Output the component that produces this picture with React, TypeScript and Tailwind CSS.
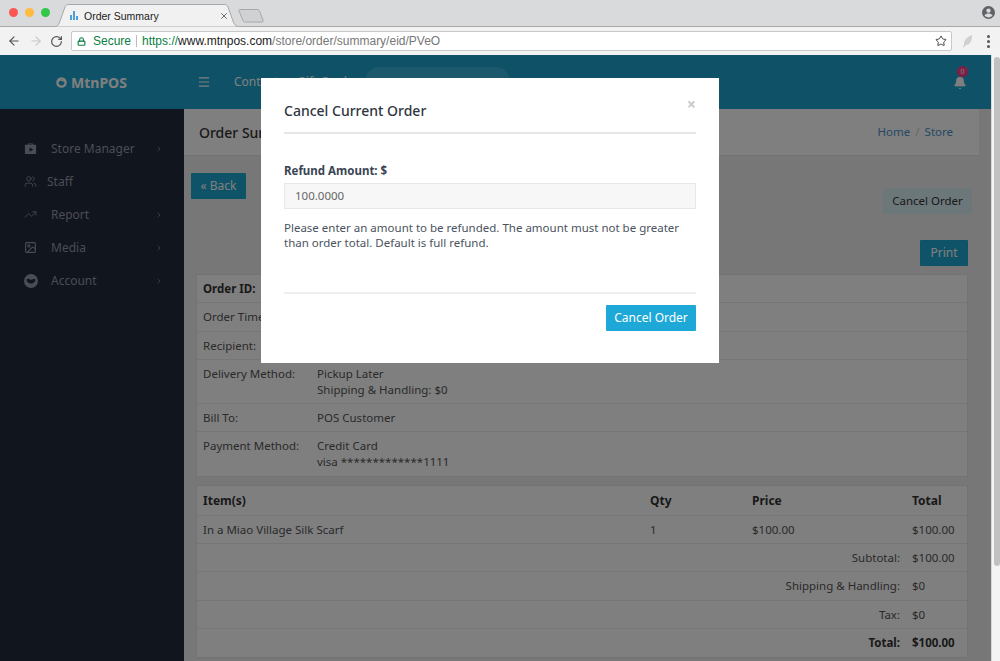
import { ArrowLeft, ArrowRight, Bell, ChevronRight, Image, Lock, Menu, RotateCw, Star, TrendingUp, Users, X } from "lucide-react"

const orderRows = [
  { label: "Order ID:", lines: [], bold: true, h: "h-[28px]" },
  { label: "Order Time:", lines: [], h: "h-[29px]" },
  { label: "Recipient:", lines: [], h: "h-[28px]" },
  { label: "Delivery Method:", lines: ["Pickup Later", "Shipping & Handling: $0"], h: "h-[44px]" },
  { label: "Bill To:", lines: ["POS Customer"], h: "h-[28px]" },
  { label: "Payment Method:", lines: ["Credit Card", "visa *************1111"], h: "h-[44px]" },
]

const totals = [
  { label: "Subtotal:", value: "$100.00", h: "h-[28px]" },
  { label: "Shipping & Handling:", value: "$0", h: "h-[29px]" },
  { label: "Tax:", value: "$0", h: "h-[28px]" },
  { label: "Total:", value: "$100.00", bold: true, h: "h-[28px]" },
]

function BrowserChrome() {
  return (
    <div className="h-[55px] shrink-0 flex flex-col font-['Liberation_Sans',sans-serif]">
      <div className="relative h-[27px] bg-[#d9dadc] border-b border-[#a8a8a8] flex items-center">
        <div className="flex gap-[7px] pl-[9px] pb-[1px]">
          <span className="w-[9px] h-[9px] rounded-full bg-[#fc5753]" />
          <span className="w-[9px] h-[9px] rounded-full bg-[#fdbc40]" />
          <span className="w-[9px] h-[9px] rounded-full bg-[#33c748]" />
        </div>
        <svg className="absolute left-[54px] top-[4px]" width="212" height="23" viewBox="0 0 212 23">
          <path d="M1 23 C4 22 5 20 6 17 L11 3 C12 1 13 .5 15 .5 H170 C172 .5 173 1 174 3 L179 17 C180 20 181 22 186 23 Z" fill="#f1f1f1" stroke="#a8a8a8" />
          <path d="M185 7 C184.500 6 185 5.500 186 5.500 H203 C204.500 5.500 205 6 205.500 7 L209 16 C209.500 17.500 209 18 208 18 H191 C190 18 189.500 17.500 189 16.500 Z" fill="#d0d1d3" stroke="#a8a8a8" />
        </svg>
        <div className="absolute left-[70px] top-[11px] flex items-end gap-[1px] h-[9px]">
          <span className="w-[2px] h-[5px] bg-[#4a9fdc]" />
          <span className="w-[2px] h-[9px] bg-[#4a9fdc]" />
          <span className="w-[2px] h-[4px] bg-[#4a9fdc]" />
        </div>
        <span className="absolute left-[84px] top-[9px] text-[10.500px] leading-[14px] text-[#222]">Order Summary</span>
        <X className="absolute left-[219px] top-[11px] text-[#555]" size={10} strokeWidth={2} />
        <svg className="absolute left-[982px] top-[6px]" width="13" height="13" viewBox="0 0 24 24" fill="#5f6368">
          <path d="M12 0a12 12 0 1 0 0 24 12 12 0 0 0 0-24zm0 4.500a4 4 0 1 1 0 8 4 4 0 0 1 0-8zm0 16.500c-3 0-5.800-1.500-7.400-3.900C5.800 15 9.800 14 12 14s6.200 1 7.400 3.100C17.800 19.500 15 21 12 21z" />
        </svg>
      </div>
      <div className="flex-1 bg-[#f2f2f2] flex items-center">
        <ArrowLeft className="ml-[7px] text-[#555]" size={14} strokeWidth={2} />
        <ArrowRight className="ml-[8px] text-[#c8c8c8]" size={14} strokeWidth={2} />
        <RotateCw className="ml-[7px] text-[#555]" size={13} strokeWidth={2.200} />
        <div className="ml-[8px] w-[881px] h-[20px] bg-white border border-[#c9c9c9] rounded-[2px] flex items-center text-[12px]">
          <Lock className="ml-[5px] text-[#0b8043]" size={9} strokeWidth={3} />
          <span className="ml-[7px] text-[#0b8043]">Secure</span>
          <span className="mx-[5px] w-px h-[12px] bg-[#bbb]" />
          <span className="text-[#0b8043]">https://</span>
          <span className="text-[#222]">www.mtnpos.com</span>
          <span className="text-[#777]">/store/order/summary/eid/PVeO</span>
          <Star className="ml-auto mr-[4px] text-[#444]" size={12} strokeWidth={2} />
        </div>
        <svg className="ml-[11px]" width="10" height="13" viewBox="0 0 10 13" fill="#cfcfcf">
          <path d="M9 0 C4 2 1 5 1 9 L0 13 L3 10 C7 10 9 6 9 0 Z" />
        </svg>
        <div className="ml-[14px] flex flex-col gap-[2px]">
          <span className="w-[3px] h-[3px] rounded-full bg-[#555]" />
          <span className="w-[3px] h-[3px] rounded-full bg-[#555]" />
          <span className="w-[3px] h-[3px] rounded-full bg-[#555]" />
        </div>
      </div>
    </div>
  )
}

function SideItem({ icon, label, arrow = true, gap = "w-[27px]" }: { icon: React.ReactNode; label: string; arrow?: boolean; gap?: string }) {
  return (
    <div className="h-[33px] flex items-center pl-[24px] text-[12px] text-[#969aa8]">
      <span className={`${gap} flex shrink-0`}>{icon}</span>
      <span>{label}</span>
      {arrow && <ChevronRight className="absolute left-[155px]" size={8} strokeWidth={2} />}
    </div>
  )
}

function Sidebar() {
  return (
    <div className="relative w-[184px] shrink-0 bg-[#222a3c] pt-[23px]">
      <SideItem
        label="Store Manager"
        icon={
          <svg width="13" height="13" viewBox="0 0 14 14" fill="currentColor">
            <path d="M4.500 3V1.500h5V3H13v10H1V3zM5.500 3h3V2.500h-3zM6 6v4.500L10 8.200z" fillRule="evenodd" />
          </svg>
        }
      />
      <SideItem label="Staff" arrow={false} gap="w-[23px]" icon={<Users size={13} strokeWidth={1.500} />} />
      <SideItem label="Report" icon={<TrendingUp size={13} strokeWidth={1.500} />} />
      <SideItem label="Media" icon={<Image size={13} strokeWidth={2} />} />
      <SideItem
        label="Account"
        icon={
          <svg width="14" height="14" viewBox="0 0 14 14" fill="currentColor">
            <path d="M7 0a7 7 0 1 0 0 14A7 7 0 0 0 7 0zM2.500 5.500C4 4 6 5.500 7 6c1.500-.8 3-1.500 4.500-.5C11 8 9.500 9.500 7 9.500S3 8 2.500 5.500z" fillRule="evenodd" />
          </svg>
        }
      />
    </div>
  )
}

function OrderPanels() {
  return (
    <div className="ml-[12px] w-[772px] flex flex-col gap-[8px] text-[11.500px] text-[#555]">
      <div className="bg-white border border-[#e6e6e6] flex flex-col divide-y divide-[#ececec]">
        {orderRows.map((row) => (
          <div key={row.label} className={`${row.h} flex items-start pt-[6px] px-[6px] leading-[16px] shrink-0`}>
            <span className={`w-[114px] shrink-0 ${row.bold ? "font-bold text-[#333]" : ""}`}>{row.label}</span>
            <div className="flex flex-col">
              {row.lines.map((line) => <span key={line}>{line}</span>)}
            </div>
          </div>
        ))}
      </div>
      <div className="bg-white border border-[#e6e6e6] flex flex-col divide-y divide-[#ececec]">
        <div className="h-[30px] grid grid-cols-[447px_102px_160px_1fr] items-center px-[6px] text-[12px] font-bold text-[#333]">
          <span>Item(s)</span>
          <span>Qty</span>
          <span>Price</span>
          <span>Total</span>
        </div>
        <div className="h-[28px] grid grid-cols-[447px_102px_160px_1fr] items-center px-[6px]">
          <span>In a Miao Village Silk Scarf</span>
          <span>1</span>
          <span>$100.00</span>
          <span>$100.00</span>
        </div>
        {totals.map((row) => (
          <div key={row.label} className={`${row.h} grid grid-cols-[697px_1fr] items-center px-[6px] ${row.bold ? "font-bold text-[#333]" : ""}`}>
            <span className="text-right">{row.label}</span>
            <span className="pl-[12px]">{row.value}</span>
          </div>
        ))}
      </div>
    </div>
  )
}

function CancelModal() {
  return (
    <div className="absolute left-[261px] top-[23px] w-[458px] h-[285px] bg-white px-[23px] flex flex-col font-['Noto_Sans',sans-serif] text-[#3f4752]">
      <div className="h-[56px] shrink-0 border-b-2 border-[#e6e6e6] flex items-center justify-between">
        <h2 className="text-[14px] font-medium text-[#2f3640] pt-[11px]">Cancel Current Order</h2>
        <span className="text-[16px] font-bold text-[#c9c9c9] leading-none pb-[3px]">×</span>
      </div>
      <label className="mt-[29px] text-[11.500px] leading-[16px] font-bold text-[#3a4452]">Refund Amount: $</label>
      <div className="mt-[4px] h-[26px] shrink-0 bg-[#f7f7f7] border border-[#e8e8e8] flex items-center pl-[10px] text-[11.500px] text-[#666]">100.0000</div>
      <p className="mt-[11px] text-[11.500px] leading-[15px] text-[#4a5360]">
        Please enter an amount to be refunded. The amount must not be greater than order total. Default is full refund.
      </p>
      <div className="mt-[42px] border-t-2 border-[#eeeeee] flex justify-end pt-[11px]">
        <button className="w-[90px] h-[26px] bg-[#1ea8d8] rounded-[1px] text-white text-[12px]">Cancel Order</button>
      </div>
    </div>
  )
}

export default function App() {
  return (
    <div className="w-[1000px] h-[661px] overflow-hidden flex flex-col bg-white">
      <BrowserChrome />
      <div className="flex-1 flex min-h-0">
        <div className="relative w-[991px] flex flex-col font-['Noto_Sans',sans-serif] bg-[#eeeeee] overflow-hidden">
          <div className="h-[54px] shrink-0 bg-[#1ea5d0] flex items-center text-[#ffffff]">
            <div className="w-[197px] pl-[56px] flex items-center gap-[4px] text-[14px] font-bold">
              <svg width="11" height="11" viewBox="0 0 12 12" fill="none" stroke="currentColor" strokeWidth="2.500">
                <circle cx="6" cy="6" r="4.500" />
                <path d="M2 5 L5 3 L10 5" strokeWidth="1.500" />
              </svg>
              MtnPOS
            </div>
            <Menu size={14} strokeWidth={2} />
            <span className="ml-[23px] text-[12px]">Content</span>
            <span className="ml-[18px] text-[12px]">Gift Card</span>
            <div className="ml-[18px] w-[145px] h-[30px] rounded-full bg-[#3bb2d8]" />
            <div className="relative ml-auto mr-[24px] mt-[2px]">
              <Bell size={14} fill="currentColor" strokeWidth={1.500} />
              <span className="absolute left-[4px] top-[-10px] w-[11px] h-[11px] rounded-full bg-[#fe3a8a] text-[7px] leading-[11px] text-center">0</span>
            </div>
          </div>
          <div className="flex-1 flex min-h-0">
            <Sidebar />
            <div className="flex-1 flex flex-col min-w-0">
              <div className="h-[47px] shrink-0 mr-[12px] bg-white border-b border-[#e6e6e6] flex items-center justify-between pl-[15px] pr-[26px]">
                <span className="text-[14px] font-medium text-[#333]">Order Summary</span>
                <div className="flex items-center gap-[5px] text-[11.500px] text-[#4a90c8]">
                  <span>Home</span>
                  <span className="text-[#ccc]">/</span>
                  <span>Store</span>
                </div>
              </div>
              <div className="h-[84px] shrink-0 flex items-start justify-between pl-[7px] pr-[19px] pt-[17px]">
                <button className="w-[55px] h-[26px] bg-[#1fa6d0] rounded-[1px] text-white text-[12px]">« Back</button>
                <button className="mt-[15px] w-[89px] h-[26px] bg-[#d9eef5] rounded-[1px] text-[#333] text-[11.500px]">Cancel Order</button>
              </div>
              <div className="h-[34px] shrink-0 flex justify-end pr-[23px]">
                <button className="w-[48px] h-[26px] bg-[#1fa6d0] rounded-[1px] text-white text-[12px]">Print</button>
              </div>
              <OrderPanels />
            </div>
          </div>
          <div className="absolute inset-0 bg-black/50" />
          <CancelModal />
        </div>
        <div className="flex-1 bg-[#f4f4f4] border-l border-[#d8d8d8] pl-[2px] pt-[2px]">
          <div className="w-[6px] h-[509px] bg-[#c1c1c1] rounded-full" />
        </div>
      </div>
    </div>
  )
}
